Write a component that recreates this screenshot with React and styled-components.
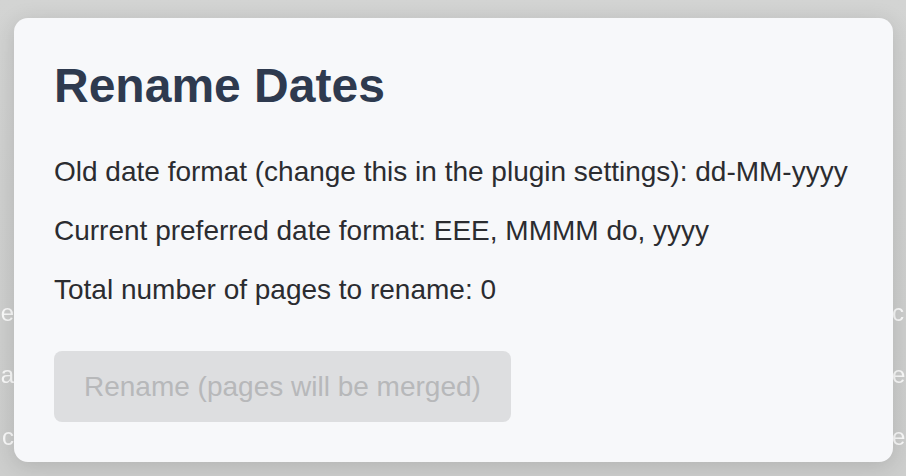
import styled, { createGlobalStyle } from "styled-components";

const GlobalStyle = createGlobalStyle`
  html, body {
    margin: 0;
    padding: 0;
    background: #cfd0cf;
  }
  body {
    font-family: "Liberation Sans", Arial, sans-serif;
  }
`;

const bgRows = [
  { left: "e", right: "c" },
  { left: "na", right: "e" },
  { left: "c", right: "e" },
];

const App = () => {
  return (
    <>
      <GlobalStyle />
      <Page>
        <Backdrop>
          {bgRows.map((row, i) => (
            <BgLine key={i}>
              <Frag>{row.left}</Frag>
              <Frag $right>{row.right}</Frag>
            </BgLine>
          ))}
        </Backdrop>
        <Modal>
          <Title>Rename Dates</Title>
          <Lines>
            <Line>
              Old date format (change this in the plugin settings): dd-MM-yyyy
            </Line>
            <Line>Current preferred date format: EEE, MMMM do, yyyy</Line>
            <Line>Total number of pages to rename: 0</Line>
          </Lines>
          <Button disabled>Rename (pages will be merged)</Button>
        </Modal>
      </Page>
    </>
  );
};

export default App;

const Page = styled.div`
  width: 906px;
  height: 476px;
  display: grid;
  overflow: hidden;
  background: linear-gradient(180deg, #d3d4d3 0%, #cfd0cf 40%, #cdcecd 100%);
`;

const Backdrop = styled.div`
  grid-area: 1 / 1;
  display: flex;
  flex-direction: column;
  gap: 30px;
  padding-top: 297px;
  filter: blur(0.5px);
`;

const BgLine = styled.div`
  display: flex;
  justify-content: space-between;
  height: 32px;
  line-height: 32px;
  font-size: 24px;
  color: rgba(255, 255, 255, 0.9);
`;

const Frag = styled.span`
  width: 14px;
  overflow: hidden;
  display: flex;
  justify-content: ${(p) => (p.$right ? "flex-start" : "flex-end")};
  white-space: nowrap;
  padding-left: ${(p) => (p.$right ? "2px" : "0")};
`;

const Modal = styled.div`
  grid-area: 1 / 1;
  align-self: start;
  margin: 18px 13px 0 14px;
  padding: 40px;
  background: #f7f8fa;
  border-radius: 14px;
  box-shadow: 0 4px 22px rgba(0, 0, 0, 0.14);
  display: flex;
  flex-direction: column;
  align-items: flex-start;
  position: relative;
`;

const Title = styled.h1`
  margin: 0 0 43px;
  font-size: 48px;
  line-height: 55px;
  font-weight: 700;
  color: #2e3a4f;
`;

const Lines = styled.div`
  display: flex;
  flex-direction: column;
  gap: 27px;
  margin-bottom: 45px;
`;

const Line = styled.p`
  margin: 0;
  font-size: 28px;
  line-height: 32px;
  color: #2b2c30;
`;

const Button = styled.button`
  height: 71px;
  padding: 0 30px;
  border: none;
  border-radius: 8px;
  background: #dddee0;
  color: #b7b8ba;
  font-family: "Liberation Sans", Arial, sans-serif;
  font-size: 28px;
  cursor: not-allowed;
`;
